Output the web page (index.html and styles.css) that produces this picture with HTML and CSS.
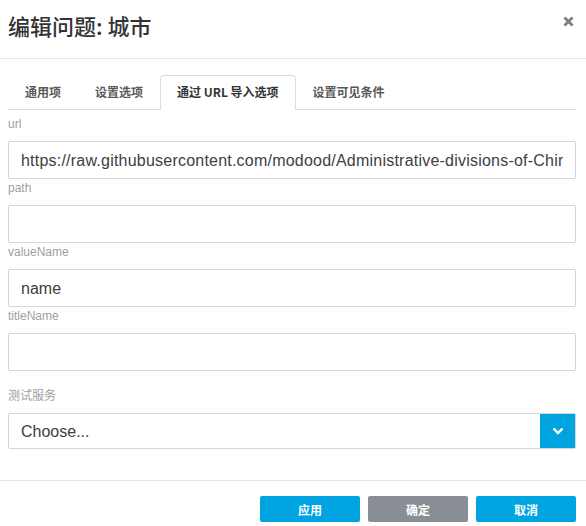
FILE: index.html
```html
<!DOCTYPE html>
<html lang="zh-CN">
<head>
<meta charset="utf-8">
<title>编辑问题: 城市</title>
<link rel="stylesheet" href="styles.css">
</head>
<body>
<div class="modal">
  <div class="modal-header">
    <h4 class="modal-title">编辑问题: 城市</h4>
    <span class="close" aria-label="关闭">
      <svg width="11" height="11" viewBox="0 0 11 11"><path d="M1.5 1.5 L9.5 9.5 M9.5 1.5 L1.5 9.5" stroke="#7d7d7d" stroke-width="2.8" stroke-linecap="butt"/></svg>
    </span>
  </div>
  <div class="modal-body">
    <ul class="tabs">
      <li class="tab">通用项</li>
      <li class="tab">设置选项</li>
      <li class="tab active">通过 URL 导入选项</li>
      <li class="tab">设置可见条件</li>
    </ul>
    <div class="tab-content">
      <div class="group">
        <label class="label">url</label>
        <input class="input input-url" type="text" value="https://raw.githubusercontent.com/modood/Administrative-divisions-of-China/master/dist/cities.json">
      </div>
      <div class="group">
        <label class="label">path</label>
        <input class="input" type="text" value="">
      </div>
      <div class="group">
        <label class="label">valueName</label>
        <input class="input" type="text" value="name">
      </div>
      <div class="group">
        <label class="label">titleName</label>
        <input class="input" type="text" value="">
      </div>
      <div class="group group-select">
        <label class="label">测试服务</label>
        <div class="select">
          <span class="select-text">Choose...</span>
          <span class="select-btn">
            <svg width="10" height="7" viewBox="0 0 10 7"><path d="M1.2 1.2 L5 5 L8.8 1.2" fill="none" stroke="#fff" stroke-width="2.4" stroke-linecap="square"/></svg>
          </span>
        </div>
      </div>
    </div>
  </div>
  <div class="modal-footer">
    <button class="btn btn-primary">应用</button>
    <button class="btn btn-grey">确定</button>
    <button class="btn btn-primary">取消</button>
  </div>
</div>
</body>
</html>
```
FILE: styles.css
```css
* { box-sizing: border-box; }
html, body {
  margin: 0;
  padding: 0;
  background: #fff;
}
body {
  font-family: "Liberation Sans", "Noto Sans CJK SC", sans-serif;
  color: #404040;
}
.modal {
  width: 586px;
  height: 526px;
  display: flex;
  flex-direction: column;
}
.modal-header {
  height: 59px;
  border-bottom: 1px solid #e5e5e5;
  display: flex;
  align-items: center;
  justify-content: space-between;
  padding: 0 12px 0 8px;
}
.modal-title {
  margin: 0;
  font-family: "Noto Sans CJK SC", sans-serif;
  font-size: 22px;
  font-weight: 500;
  color: #333;
  line-height: 26px;
  margin-top: -9px;
}
.close {
  display: flex;
  width: 11px;
  height: 11px;
  margin-top: -15px;
}
.modal-body {
  padding: 16px 10px 0 8px;
  flex: 1;
}
.tabs {
  list-style: none;
  margin: 0;
  padding: 0;
  display: flex;
  border-bottom: 1px solid #dcdcdc;
}
.tab {
  height: 34px;
  line-height: 34px;
  padding: 0 17px;
  font-family: "Noto Sans CJK SC", sans-serif;
  font-size: 12px;
  font-weight: 600;
  color: #595959;
  white-space: nowrap;
}
.tab.active {
  padding: 0 16px;
  border: 1px solid #dcdcdc;
  border-bottom-color: #fff;
  border-radius: 4px 4px 0 0;
  margin-bottom: -1px;
  height: 35px;
  line-height: 32px;
  color: #333;
  background: #fff;
}
.tab-content {
  padding-top: 5px;
}
.group {
  display: flex;
  flex-direction: column;
}
.label {
  font-size: 12px;
  line-height: 18px;
  height: 18px;
  color: #a0a0a0;
  margin-bottom: 8px;
  font-family: "Liberation Sans", "Noto Sans CJK SC", sans-serif;
}
.input {
  height: 38px;
  width: 100%;
  border: 1px solid #d3d7dc;
  border-radius: 2px;
  padding: 2px 12px 0;
  font-family: "Liberation Sans", sans-serif;
  font-size: 16px;
  color: #404040;
  background: #fff;
  outline: none;
}
.input-url {
  letter-spacing: 0.22px;
}
.group-select {
  margin-top: 16px;
}
.select {
  height: 36px;
  border: 1px solid #d3d7dc;
  border-radius: 2px;
  display: flex;
  align-items: center;
  justify-content: space-between;
  padding-left: 12px;
}
.select-text {
  font-size: 16px;
  color: #404040;
  padding-top: 2px;
}
.select-btn {
  width: 35px;
  height: 34px;
  background: #00a4e1;
  display: flex;
  align-items: center;
  justify-content: center;
}
.modal-footer {
  height: 46px;
  border-top: 1px solid #e5e5e5;
  display: flex;
  justify-content: flex-end;
  align-items: flex-start;
  gap: 8px;
  padding: 15px 10px 0 0;
}
.btn {
  width: 100px;
  height: 26px;
  border: none;
  border-radius: 2px;
  color: #fff;
  font-family: "Noto Sans CJK SC", sans-serif;
  font-size: 12px;
  font-weight: bold;
  padding: 0;
}
.btn-primary { background: #00a4e1; }
.btn-grey { background: #888e94; }
```
